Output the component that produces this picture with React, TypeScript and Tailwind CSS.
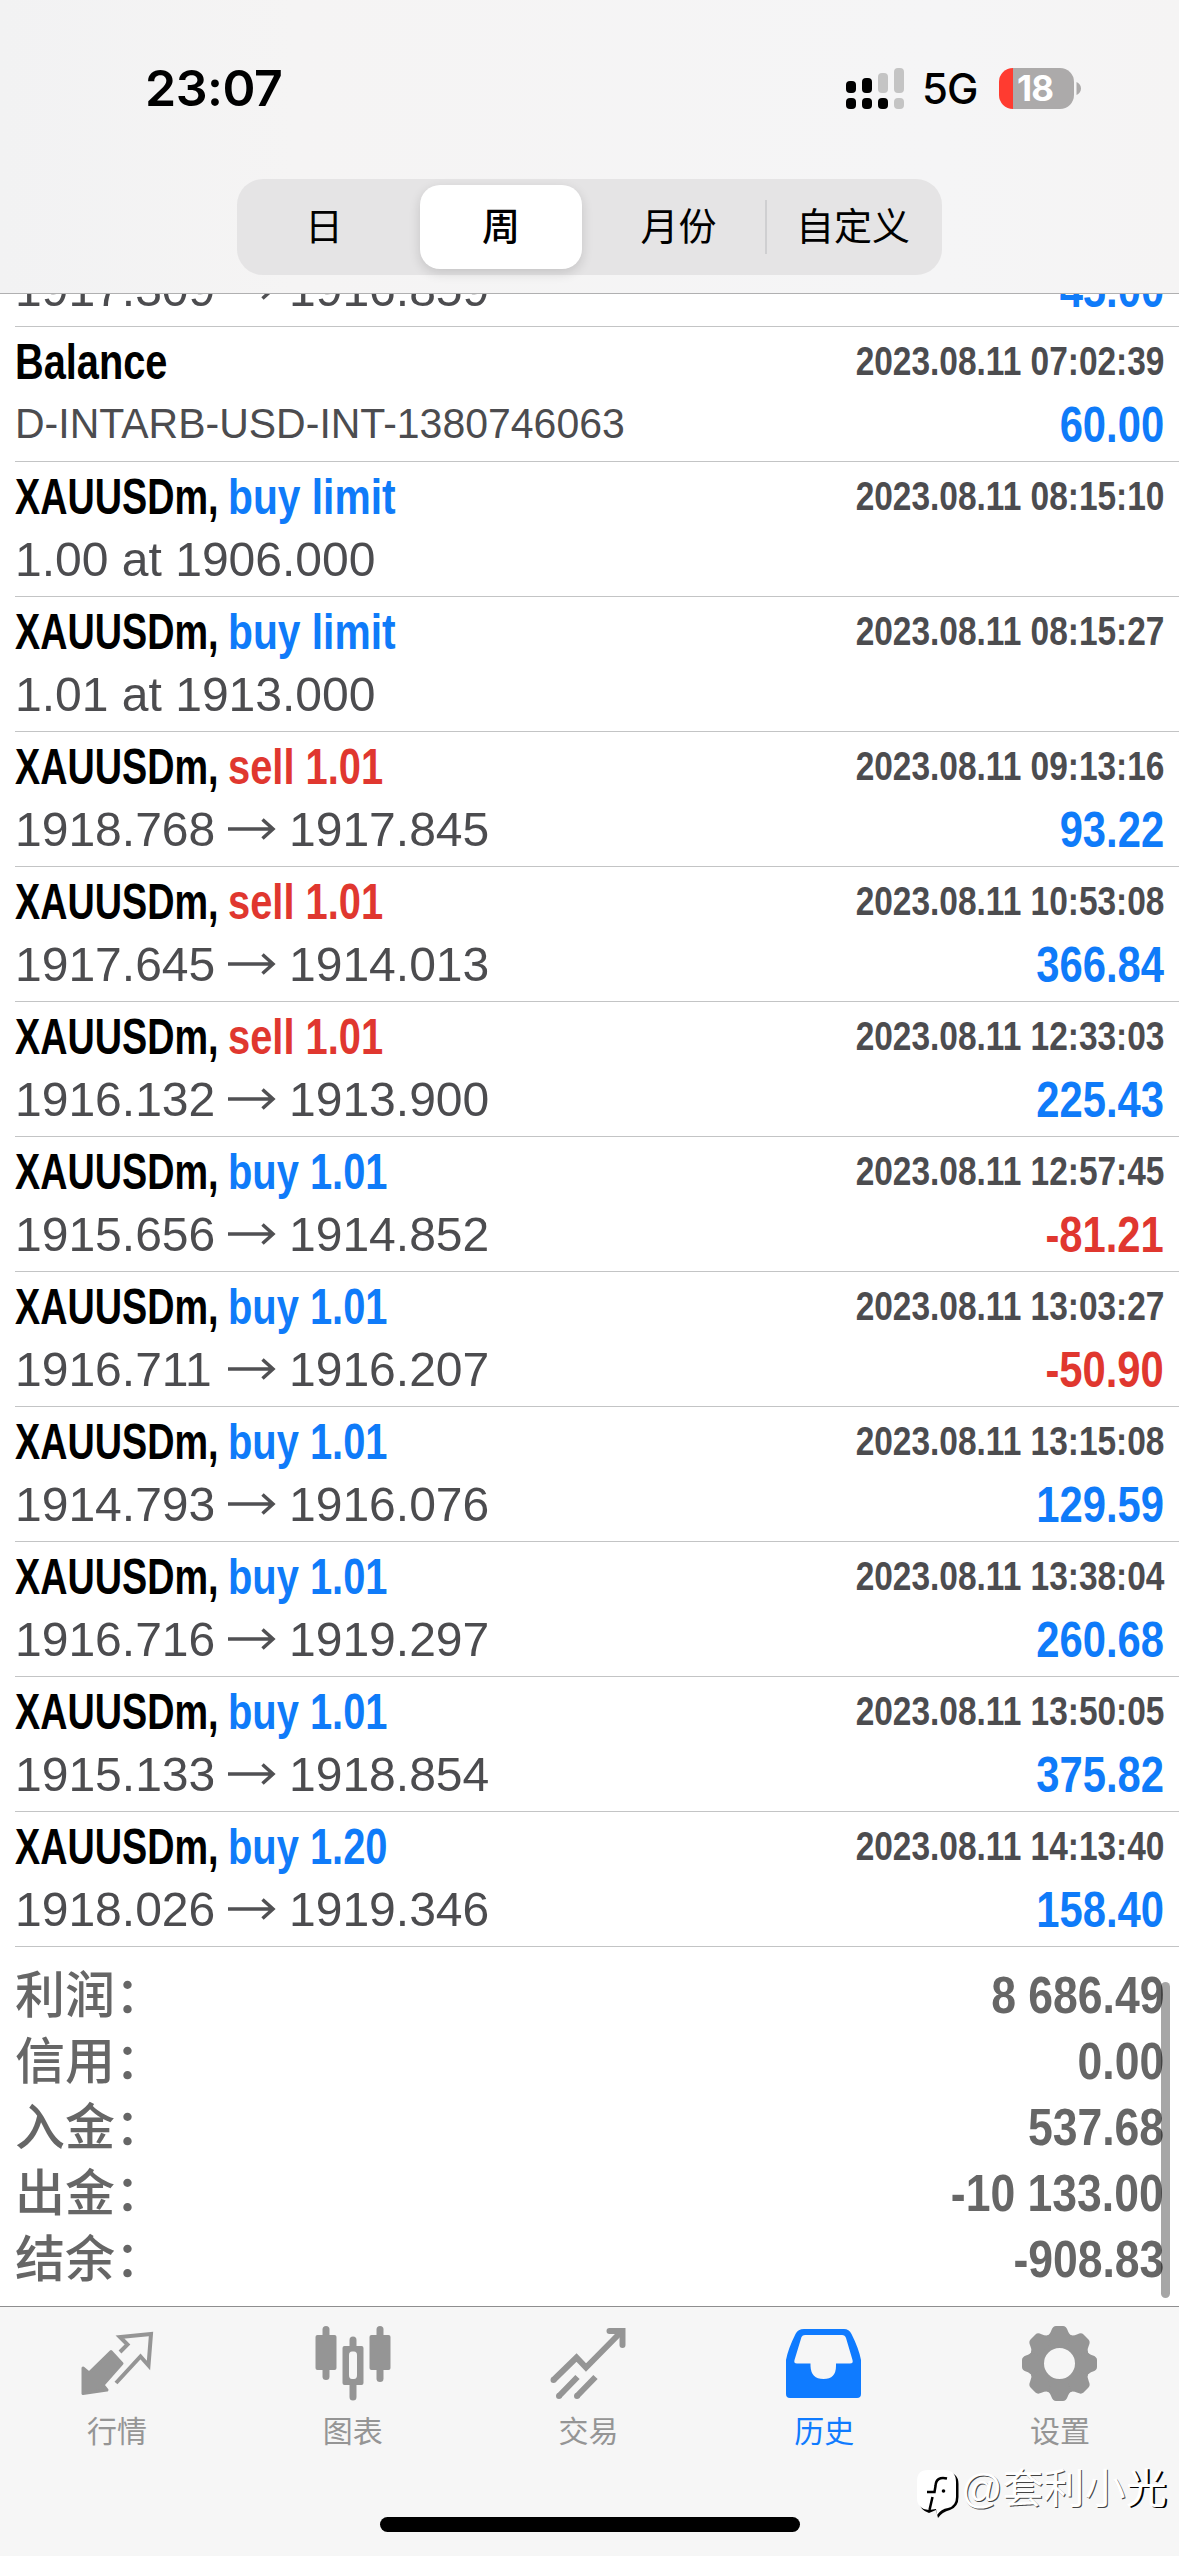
import React from 'react';

type Tone = 'blue' | 'red';

interface Deal {
  symbol: string;
  action?: string;
  tone?: Tone;
  time: string;
  detail?: string;
  comment?: string;
  open?: string;
  close?: string;
  profit?: string;
}

const deals: Deal[] = [
  { symbol: 'Balance', time: '2023.08.11 07:02:39', comment: 'D-INTARB-USD-INT-1380746063', profit: '60.00' },
  { symbol: 'XAUUSDm,', action: 'buy limit', tone: 'blue', time: '2023.08.11 08:15:10', detail: '1.00 at 1906.000' },
  { symbol: 'XAUUSDm,', action: 'buy limit', tone: 'blue', time: '2023.08.11 08:15:27', detail: '1.01 at 1913.000' },
  { symbol: 'XAUUSDm,', action: 'sell 1.01', tone: 'red', time: '2023.08.11 09:13:16', open: '1918.768', close: '1917.845', profit: '93.22' },
  { symbol: 'XAUUSDm,', action: 'sell 1.01', tone: 'red', time: '2023.08.11 10:53:08', open: '1917.645', close: '1914.013', profit: '366.84' },
  { symbol: 'XAUUSDm,', action: 'sell 1.01', tone: 'red', time: '2023.08.11 12:33:03', open: '1916.132', close: '1913.900', profit: '225.43' },
  { symbol: 'XAUUSDm,', action: 'buy 1.01', tone: 'blue', time: '2023.08.11 12:57:45', open: '1915.656', close: '1914.852', profit: '-81.21' },
  { symbol: 'XAUUSDm,', action: 'buy 1.01', tone: 'blue', time: '2023.08.11 13:03:27', open: '1916.711', close: '1916.207', profit: '-50.90' },
  { symbol: 'XAUUSDm,', action: 'buy 1.01', tone: 'blue', time: '2023.08.11 13:15:08', open: '1914.793', close: '1916.076', profit: '129.59' },
  { symbol: 'XAUUSDm,', action: 'buy 1.01', tone: 'blue', time: '2023.08.11 13:38:04', open: '1916.716', close: '1919.297', profit: '260.68' },
  { symbol: 'XAUUSDm,', action: 'buy 1.01', tone: 'blue', time: '2023.08.11 13:50:05', open: '1915.133', close: '1918.854', profit: '375.82' },
  { symbol: 'XAUUSDm,', action: 'buy 1.20', tone: 'blue', time: '2023.08.11 14:13:40', open: '1918.026', close: '1919.346', profit: '158.40' },
];

const totals = [
  { label: '利润：', value: '8 686.49' },
  { label: '信用：', value: '0.00' },
  { label: '入金：', value: '537.68' },
  { label: '出金：', value: '-10 133.00' },
  { label: '结余：', value: '-908.83' },
];

const StatusBar = () => (
  <div className="h-[179px] pt-[57px] pl-[145px] pr-[98px] flex justify-between font-['Inter',sans-serif] text-black">
    <div className="h-[62px] leading-[63px] text-[50px] font-semibold tracking-[-0.5px]">23:07</div>
    <div className="h-[62px] flex items-center">
      <svg className="w-[60px] h-[44px]" viewBox="0 0 60 44">
        <rect x="1" y="15" width="10" height="12" rx="4" />
        <rect x="17" y="12" width="10" height="15" rx="4" />
        <rect x="33" y="7" width="10" height="20" rx="4" fill="#c4c4c4" />
        <rect x="49" y="2" width="10" height="25" rx="4" fill="#c4c4c4" />
        <rect x="1" y="32" width="10" height="11" rx="4" />
        <rect x="17" y="32" width="10" height="11" rx="4" />
        <rect x="33" y="32" width="10" height="11" rx="4" />
        <rect x="49" y="32" width="10" height="11" rx="4" fill="#c4c4c4" />
      </svg>
      <div className="ml-[17px] w-[77px] text-[42px] font-medium tracking-[-1px] leading-[62px] pt-[2px] whitespace-nowrap">5G</div>
      <div className="w-[75px] h-[41px] pr-[3px] rounded-[14px] overflow-hidden bg-[linear-gradient(90deg,#ff3b30_14px,#acaaaa_14px)] flex items-center justify-center text-white text-[35px] font-bold tracking-[-1px]">
        18
      </div>
      <svg className="ml-[2px] w-[5px] h-[13px]" viewBox="0 0 5 13">
        <path d="M0.5 0C3 1 5 3.5 5 6.5S3 12 0.5 13Z" fill="#acaaaa" />
      </svg>
    </div>
  </div>
);

const PeriodSwitch = () => (
  <div className="ml-[237px] w-[705px] h-[96px] p-[6px] rounded-[26px] bg-[#e5e4e5] flex items-center text-[38px] leading-none text-black">
    <div className="w-[162px] text-center">日</div>
    <div className="ml-[15px] w-[162px] h-[84px] rounded-[20px] bg-white shadow-[0_4px_12px_rgba(0,0,0,0.14)] flex items-center justify-center font-medium">
      周
    </div>
    <div className="w-[183px] pl-[10px] text-center">月份</div>
    <div className="w-[2px] h-[54px] bg-[#cfcfd1]" />
    <div className="flex-1 pl-[3px] text-center">自定义</div>
  </div>
);

const PriceMove = ({ open, close }: { open: string; close: string }) => (
  <div className="h-[66px] leading-[66px] text-[49px] flex items-center">
    <div className="w-[213px]">
      <div className="origin-left w-max scale-x-[0.98]">{open}</div>
    </div>
    <svg className="w-[48px] h-[24px]" viewBox="0 0 48 24" fill="none" stroke="#505053" strokeWidth="3.5">
      <path d="M0 12H45M34.500 2.500L45 12L34.500 21.500" />
    </svg>
    <div className="ml-[13px] origin-left w-max scale-x-[0.98]">{close}</div>
  </div>
);

const Profit = ({ value }: { value?: string }) => (
  <div className={`h-[66px] leading-[66px] text-[50px] font-bold origin-right w-max scale-x-[0.835] ${value?.startsWith('-') ? 'text-[#e0372f]' : 'text-[#0f7bf9]'}`}>
    {value}
  </div>
);

const DealRow = ({ deal }: { deal: Deal }) => {
  const isLimit = deal.action === 'buy limit';
  return (
    <div className="ml-[15px] h-[135px] pr-[15px] border-b border-[#c3c4c5] flex justify-between text-[#4c4c4f]">
      <div className="pt-[7px]">
        <div className="h-[57px] leading-[56px] flex text-[50px] font-bold">
          <div className="w-[213px] text-black">
            <div className={`origin-left w-max ${deal.action ? 'scale-x-[0.755]' : 'scale-x-[0.795]'}`}>{deal.symbol}</div>
          </div>
          {deal.action && (
            <div className={`origin-left w-max ${isLimit ? 'scale-x-[0.815]' : 'scale-x-[0.797]'} ${deal.tone === 'blue' ? 'text-[#0f7bf9]' : 'text-[#e0372f]'}`}>
              {deal.action}
            </div>
          )}
        </div>
        {deal.comment && <div className="h-[66px] leading-[65px] text-[42px] origin-left w-max scale-x-[0.976]">{deal.comment}</div>}
        {deal.detail && <div className="h-[66px] leading-[66px] text-[49px] origin-left w-max scale-x-[0.98]">{deal.detail}</div>}
        {deal.open && deal.close && <PriceMove open={deal.open} close={deal.close} />}
      </div>
      <div className="pt-[7px] flex flex-col items-end">
        <div className="h-[58px] leading-[54px] text-[41px] font-bold origin-right w-max scale-x-[0.816]">{deal.time}</div>
        {deal.profit && <Profit value={deal.profit} />}
      </div>
    </div>
  );
};

const QuotesIcon = () => (
  <svg className="size-20" viewBox="0 0 80 80">
    <path d="M33 29.500L44 41.500L25 63L29 68L5 71.500V46L11 51Z" fill="currentColor" stroke="currentColor" strokeWidth="3" strokeLinejoin="round" />
    <path d="M42 30L49.500 22.500L42 15L73 12L70.500 43.500L62.500 34.500L38 61" fill="none" stroke="currentColor" strokeWidth="4" />
  </svg>
);

const ChartIcon = () => (
  <svg className="size-20" viewBox="0 0 80 80" fill="currentColor">
    <rect x="1.500" y="13" width="21" height="35" rx="2" />
    <rect x="8.500" y="4" width="7" height="54" rx="3.500" />
    <path fillRule="evenodd" d="M30.500 24H47.500Q49.500 24 49.500 26V61Q49.500 63 47.500 63H30.500Q28.500 63 28.500 61V26Q28.500 24 30.500 24ZM38 29.500Q35 29.500 35 33V53Q35 57 38 57H40Q43 57 43 53V33Q43 29.500 40 29.500Z" />
    <path d="M35.500 25V18a3.500 3.500 0 0 1 7 0V25ZM35.500 62V75a3.500 3.500 0 0 0 7 0V62Z" />
    <rect x="55.500" y="13" width="21" height="35" rx="2" />
    <rect x="62.500" y="4" width="7" height="56" rx="3.500" />
  </svg>
);

const TradeIcon = () => (
  <svg className="size-20" viewBox="0 0 80 80" fill="none" stroke="currentColor" strokeWidth="6">
    <path d="M4.500 58L27.500 35.500L37 45.500L73 9" strokeLinejoin="miter" />
    <path d="M60.500 9H73.500V23" strokeLinecap="round" />
    <path d="M10 74L28.500 55M28 74L46.500 55" />
    <path d="M4.500 58h0M10 74h0M28 74h0" strokeLinecap="round" />
  </svg>
);

const HistoryIcon = () => (
  <svg className="size-20" viewBox="0 0 80 80" fill="currentColor">
    <path
      fillRule="evenodd"
      d="M19 7H59Q64 7 66.500 12Q74 27 76 38V72Q76 76 72 76H5Q1 76 1 72V38Q3 27 10.500 12Q13 7 19 7ZM20 13Q17.500 13 16.500 15L9.500 38Q8.500 41.500 12 41.500H25.500V44Q26 57 38.500 57T51 44V41.500H65Q68.500 41.500 67.500 38L61 16Q60 13 57 13Z"
    />
  </svg>
);

const teeth = [0, 45, 90, 135, 180, 225, 270, 315];

const SettingsIcon = () => (
  <svg className="size-20" viewBox="0 0 80 80" fill="currentColor">
    <circle cx="38.500" cy="41.500" r="23" fill="none" stroke="currentColor" strokeWidth="15" />
    {teeth.map((angle) => (
      <path key={angle} transform={`rotate(${angle} 38.500 41.500)`} d="M26 14Q29 12.500 30.500 8Q32 4 35 4H42Q45 4 46.500 8Q48 12.500 51 14L46 21H31Z" />
    ))}
  </svg>
);

const tabs = [
  { label: '行情', icon: QuotesIcon },
  { label: '图表', icon: ChartIcon },
  { label: '交易', icon: TradeIcon },
  { label: '历史', icon: HistoryIcon, active: true },
  { label: '设置', icon: SettingsIcon },
];

const Watermark = () => (
  <div className="absolute left-[917px] top-[2464px] flex items-start text-white text-[41px] leading-[50px] whitespace-nowrap">
    <svg className="w-[46px] h-[56px]" viewBox="0 0 46 56">
      <path d="M12 8H28Q41.500 8 41.500 20V33Q41.500 43 33 46Q25 48 21 54L19 46L12 49Q3 46 2 38V18Q2 8 12 8Z" fill="#000" />
      <path d="M11 6H27Q39 6 39 18V33Q39 42 31 44Q24 45 20 51L19 45L12 46Q0 45 0 34V17Q0 6 11 6Z" fill="#fff" />
      <path d="M30 14.500Q19 12 18.500 22L17.500 28H10M15.500 33L12.500 46" fill="none" stroke="#000" strokeWidth="2.5" />
      <circle cx="26.500" cy="27" r="1.800" />
    </svg>
    <span className="-ml-[2px] [text-shadow:1px_1px_0_#444]">
      @套利小<span className="[text-shadow:2px_1px_0_#000]">光</span>
    </span>
  </div>
);

export default function App() {
  return (
    <div className="relative w-[1179px] h-[2556px] overflow-hidden bg-white flex flex-col font-['Liberation_Sans','Noto_Sans_CJK_SC',sans-serif]">
      <header className="h-[294px] shrink-0 border-b border-[#b0b0b1] bg-[linear-gradient(90deg,#f2f2f3,#f5f4f4_25%,#f5f5f6_80%,#f5f4f4)]">
        <StatusBar />
        <PeriodSwitch />
      </header>

      <main className="h-[2012px] shrink-0 overflow-hidden">
        {/* Row scrolled halfway under the header */}
        <div className="ml-[15px] h-[33px] pr-[15px] overflow-hidden border-b border-[#c3c4c5] flex items-end justify-between text-[#4c4c4f]">
          <div className="mb-[4px]">
            <PriceMove open="1917.309" close="1916.859" />
          </div>
          <div className="mb-[3px]">
            <Profit value="45.00" />
          </div>
        </div>
        {deals.map((deal) => (
          <DealRow key={deal.time} deal={deal} />
        ))}
        <div className="pt-[16px] pl-[15px] pr-[15px] text-[#666]">
          {totals.map((row) => (
            <div key={row.label} className="h-[66px] leading-[66px] flex justify-between text-[50px]">
              <span className="font-medium">{row.label}</span>
              <span className="leading-[65px] text-[52px] font-bold origin-right scale-x-[0.856]">{row.value}</span>
            </div>
          ))}
        </div>
      </main>

      <nav className="h-[250px] shrink-0 border-t border-[#8e8e8f] bg-[#f6f6f6] flex flex-col items-center">
        <div className="w-full h-[210px] pt-[15px] flex">
          {tabs.map(({ label, icon: Icon, active }) => (
            <div key={label} className={`flex-1 flex flex-col items-center ${active ? 'text-[#0f7bff]' : 'text-[#959595]'}`}>
              <Icon />
              <div className="mt-[8px] mr-[2px] text-[30px] leading-[44px]">{label}</div>
            </div>
          ))}
        </div>
        <div className="w-[420px] h-[15px] rounded-full bg-black" />
      </nav>

      {/* Scroll indicator */}
      <div className="absolute left-[1161px] top-[1982px] w-[9px] h-[316px] rounded-full bg-black/35" />
      <Watermark />
    </div>
  );
}
